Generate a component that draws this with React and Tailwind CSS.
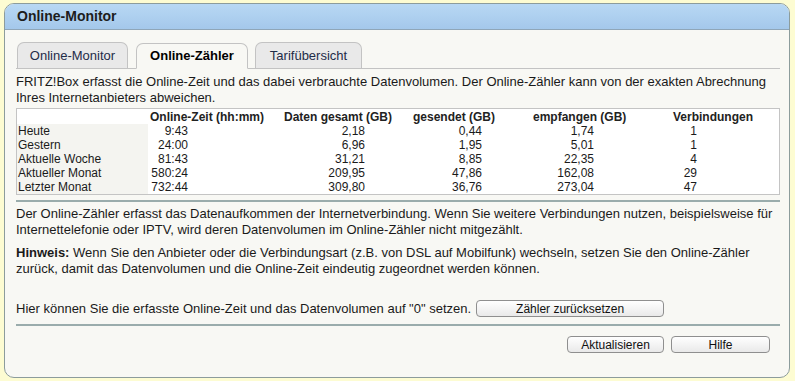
const rows = [
  ['Heute', '9:43', '2,18', '0,44', '1,74', '1'],
  ['Gestern', '24:00', '6,96', '1,95', '5,01', '1'],
  ['Aktuelle Woche', '81:43', '31,21', '8,85', '22,35', '4'],
  ['Aktueller Monat', '580:24', '209,95', '47,86', '162,08', '29'],
  ['Letzter Monat', '732:44', '309,80', '36,76', '273,04', '47'],
];

// column widths, header left padding, value block width
const cols = [
  { w: 'w-[124px]', pl: 'pl-[2px]', vw: 'w-[40px]', title: 'Online-Zeit (hh:mm)' },
  { w: 'w-[128px]', pl: 'pl-[12px]', vw: 'w-[93px]', title: 'Daten gesamt (GB)' },
  { w: 'w-[112px]', pl: 'pl-[13px]', vw: 'w-[82px]', title: 'gesendet (GB)' },
  { w: 'w-[138px]', pl: 'pl-[21px]', vw: 'w-[82px]', title: 'empfangen (GB)' },
  { w: 'flex-1', pl: 'pl-[23px]', vw: 'w-[47px]', title: 'Verbindungen' },
];

function Tab({ label, active, className }) {
  return (
    <div
      className={`h-[26px] flex items-center justify-center rounded-t-[7px] border border-[#c3c3c3] text-[13px] ${
        active
          ? 'bg-[#f8f8f4] border-b-[#f8f8f4] font-bold text-black -mb-px'
          : 'bg-[#e9e9e9] border-b-0 text-[#1e2c48]'
      } ${className}`}
    >
      {label}
    </div>
  );
}

function Button({ children, className }) {
  return (
    <button
      className={`h-[17px] rounded-[4px] border border-[#8f8f8f] bg-gradient-to-b from-white to-[#e9e9e9] text-[12px] leading-none text-[#111] ${className}`}
    >
      {children}
    </button>
  );
}

export default function App() {
  return (
    <div className="min-h-[381px] bg-[#fdfcd2] pt-[3px] pl-[4px] pr-[5px] pb-[3px] font-['Liberation_Sans',Arial,sans-serif] text-[#1a1a1a]">
      <div className="h-[375px] rounded-[10px] border border-[#8c9c9c] bg-[#f8f8f4] overflow-hidden flex flex-col">
        {/* Header */}
        <div className="h-[26px] shrink-0 bg-gradient-to-b from-[#b8d8f4] to-[#a4c8eb] border-b border-[#8fa6b8] pl-[12px] flex items-center">
          <span className="text-[14px] font-bold text-[#1d1d1d]">Online-Monitor</span>
        </div>

        <div className="flex-1 flex flex-col pl-[11px] pr-[9px]">
          {/* Tabs */}
          <div className="mt-[12px] flex items-end border-b border-[#c3c3c3]">
            <Tab label="Online-Monitor" className="ml-[1px] w-[111px]" />
            <Tab label="Online-Zähler" active className="ml-[8px] w-[112px]" />
            <Tab label="Tarifübersicht" className="ml-[7px] w-[107px]" />
          </div>

          <p className="mt-[5px] text-[13px] leading-[16px]">
            FRITZ!Box erfasst die Online-Zeit und das dabei verbrauchte Datenvolumen. Der Online-Zähler kann von der exakten Abrechnung Ihres Internetanbieters abweichen.
          </p>

          {/* Table */}
          <div className="mt-[2px] border border-[#c4c4c4] text-[12px] leading-[14px]">
            <div className="flex h-[15px] items-center bg-white font-bold text-[#222]">
              <div className="w-[131px]" />
              {cols.map((c) => (
                <div key={c.title} className={`${c.w} ${c.pl}`}>
                  {c.title}
                </div>
              ))}
            </div>
            {rows.map((r) => (
              <div key={r[0]} className="flex h-[14px] items-center">
                <div className="w-[131px] h-full bg-[#f4f4f0] pl-[1px]">{r[0]}</div>
                {cols.map((c, i) => (
                  <div key={c.title} className={`${c.w} h-full bg-white`}>
                    <div className={`${c.vw} text-right`}>{r[i + 1]}</div>
                  </div>
                ))}
              </div>
            ))}
          </div>

          <div className="mt-[5px] h-[2px] bg-[#9aacac]" />

          <p className="mt-[4px] text-[13px] leading-[16px]">
            Der Online-Zähler erfasst das Datenaufkommen der Internetverbindung. Wenn Sie weitere Verbindungen nutzen, beispielsweise für Internettelefonie oder IPTV, wird deren Datenvolumen im Online-Zähler nicht mitgezählt.
          </p>

          <p className="mt-[7px] text-[13px] leading-[16px]">
            <span className="font-bold">Hinweis:</span> Wenn Sie den Anbieter oder die Verbindungsart (z.B. von DSL auf Mobilfunk) wechseln, setzen Sie den Online-Zähler zurück, damit das Datenvolumen und die Online-Zeit eindeutig zugeordnet werden können.
          </p>

          <div className="mt-[23px] flex items-center text-[13px] leading-[16px]">
            <span>Hier können Sie die erfasste Online-Zeit und das Datenvolumen auf "0" setzen.</span>
            <Button className="ml-[5px] w-[188px]">Zähler zurücksetzen</Button>
          </div>

          <div className="mt-[7px] h-[2px] bg-[#9aacac]" />

          <div className="mt-[10px] flex justify-end pr-[10px] gap-[7px]">
            <Button className="w-[97px]">Aktualisieren</Button>
            <Button className="w-[99px]">Hilfe</Button>
          </div>
        </div>
      </div>
    </div>
  );
}
